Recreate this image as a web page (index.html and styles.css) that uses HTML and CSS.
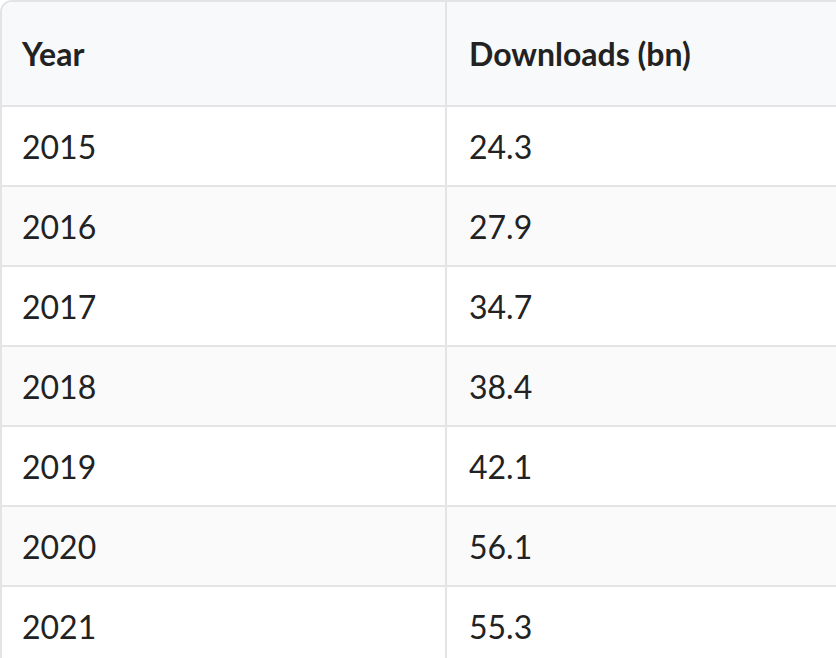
FILE: index.html
```html
<!DOCTYPE html>
<html lang="en">
<head>
<meta charset="utf-8">
<title>Downloads</title>
<link rel="stylesheet" href="styles.css">
</head>
<body>
<div class="table-wrap">
  <table class="data-table">
    <thead>
      <tr><th>Year</th><th>Downloads (bn)</th></tr>
    </thead>
    <tbody>
      <tr><td>2015</td><td>24.3</td></tr>
      <tr><td>2016</td><td>27.9</td></tr>
      <tr><td>2017</td><td>34.7</td></tr>
      <tr><td>2018</td><td>38.4</td></tr>
      <tr><td>2019</td><td>42.1</td></tr>
      <tr><td>2020</td><td>56.1</td></tr>
      <tr><td>2021</td><td>55.3</td></tr>
    </tbody>
  </table>
</div>
</body>
</html>
```
FILE: styles.css
```css
html, body {
  margin: 0;
  padding: 0;
  overflow: hidden;
  background: #ffffff;
}

.table-wrap {
  width: 892px;
  border: 2px solid #e4e4e6;
  border-radius: 12px;
  overflow: hidden;
  box-sizing: border-box;
}

.data-table {
  width: 100%;
  border-collapse: collapse;
  table-layout: fixed;
  font-family: Lato, "Noto Sans", sans-serif;
  font-size: 32px;
  color: #222222;
}

.data-table th,
.data-table td {
  text-align: left;
  padding: 0 22px;
  vertical-align: middle;
}

.data-table th:first-child,
.data-table td:first-child {
  padding-left: 20px;
}

.data-table th + th,
.data-table td + td {
  border-left: 2px solid #e4e4e6;
}

.data-table thead tr {
  height: 104px;
  background: #f8f9fa;
}

.data-table th {
  font-weight: 700;
  border-bottom: 2px solid #e4e4e6;
}

.data-table tbody tr {
  height: 80px;
}

.data-table tbody td {
  border-bottom: 2px solid #e4e4e6;
}

.data-table tbody tr:nth-child(even) {
  background: #fafafa;
}
```
